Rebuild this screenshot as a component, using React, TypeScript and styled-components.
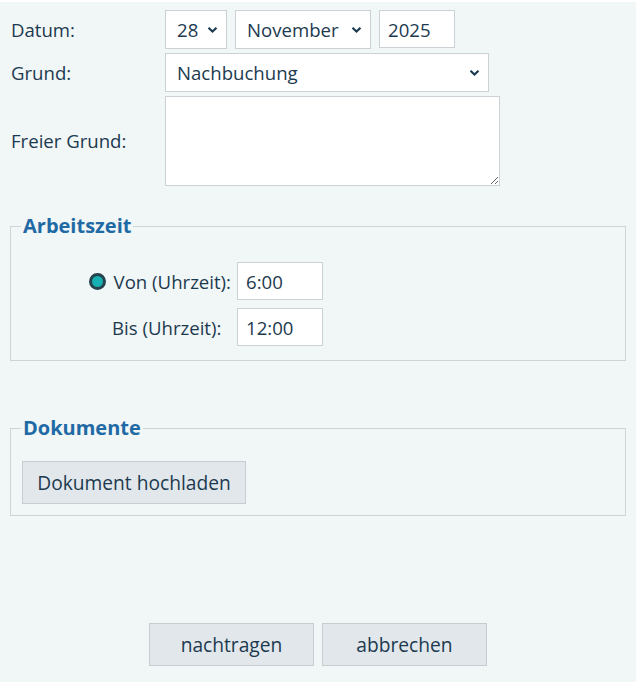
import React from 'react'
import styled, { createGlobalStyle } from 'styled-components'

const GlobalStyle = createGlobalStyle`
  body {
    margin: 0;
    background: #ffffff;
    font-family: "Open Sans", "Noto Sans", sans-serif;
    color: #1c3a4f;
  }
`

const Page = styled.div`
  margin-top: 2px;
  width: 636px;
  height: 680px;
  background: #f1f6f7;
  box-sizing: border-box;
  padding: 8px 0 0 0;
  display: flex;
  flex-direction: column;
`

const FormGrid = styled.div`
  display: grid;
  grid-template-columns: 154px auto;
  row-gap: 4px;
  padding-left: 11px;
  align-items: center;
`

const Label = styled.label`
  font-size: 18.6px;
  line-height: 22px;
`

const FieldRow = styled.div`
  display: flex;
  gap: 8px;
`

const SelectWrap = styled.div<{ $w: number }>`
  position: relative;
  width: ${p => p.$w}px;
  height: 39px;
`

const Select = styled.select`
  appearance: none;
  width: 100%;
  height: 100%;
  box-sizing: border-box;
  border: 1px solid #cbd1d4;
  background: #ffffff;
  font-family: inherit;
  font-size: 18.6px;
  color: #1c3a4f;
  padding: 0 28px 0 11px;
  border-radius: 0;
  outline: none;
`

const Chevron = styled.svg`
  position: absolute;
  right: 9px;
  top: 16px;
  pointer-events: none;
`

const TextInput = styled.input<{ $w: number }>`
  width: ${p => p.$w}px;
  height: 38px;
  box-sizing: border-box;
  border: 1px solid #cbd1d4;
  background: #ffffff;
  font-family: inherit;
  font-size: 18.6px;
  color: #1c3a4f;
  padding: 0 8px;
  border-radius: 0;
  outline: none;
`

const TextArea = styled.textarea`
  width: 335px;
  height: 90px;
  box-sizing: border-box;
  border: 1px solid #cbd1d4;
  background: #ffffff;
  font-family: inherit;
  font-size: 18px;
  border-radius: 0;
  outline: none;
  display: block;
`

const Fieldset = styled.fieldset<{ $top: number; $bottom: number }>`
  margin: ${p => p.$top}px 0 0 10px;
  width: 616px;
  box-sizing: border-box;
  border: 1px solid #cdd3d6;
  padding: 0 11px ${p => p.$bottom}px 11px;
`

const Legend = styled.legend`
  font-size: 20px;
  line-height: 24px;
  font-weight: 700;
  color: #1f6aa5;
  padding: 0 2px;
  margin-left: -1px;
`

const TimeGrid = styled.div`
  display: grid;
  grid-template-columns: 209px auto;
  column-gap: 6px;
  row-gap: 8px;
  align-items: center;
  margin-top: 24px;
`

const TimeLabel = styled.label`
  display: flex;
  align-items: center;
  justify-content: flex-end;
  gap: 8px;
  font-size: 18.6px;
`

const Radio = styled.input`
  appearance: none;
  margin: 0;
  width: 17px;
  height: 17px;
  border-radius: 50%;
  border: 3px solid #24434d;
  background: #16b0b3;
  box-sizing: border-box;
`

const Button = styled.button<{ $w: number }>`
  width: ${p => p.$w}px;
  height: 43px;
  box-sizing: border-box;
  border: 1px solid #c6cdd1;
  background: #e2e7eb;
  font-family: inherit;
  font-size: 19.2px;
  color: #1c3a4f;
  border-radius: 0;
  cursor: pointer;
`

const DocBody = styled.div`
  padding: 21px 0 0 0;
`

const Actions = styled.div`
  display: flex;
  justify-content: center;
  gap: 8px;
  margin-top: 107px;
`

const ChevronIcon = () => (
  <Chevron width="11" height="8" viewBox="0 0 11 8">
    <path d="M1.5 1.8 L5.5 5.6 L9.5 1.8" fill="none" stroke="#1c3a4f" strokeWidth="2.2" />
  </Chevron>
)

const App: React.FC = () => {
  return (
    <>
      <GlobalStyle />
      <Page>
        <FormGrid>
          <Label>Datum:</Label>
          <FieldRow>
            <SelectWrap $w={62}>
              <Select defaultValue="28">
                <option value="28">28</option>
              </Select>
              <ChevronIcon />
            </SelectWrap>
            <SelectWrap $w={136}>
              <Select defaultValue="November">
                <option value="November">November</option>
              </Select>
              <ChevronIcon />
            </SelectWrap>
            <TextInput $w={76} defaultValue="2025" />
          </FieldRow>
          <Label>Grund:</Label>
          <SelectWrap $w={324}>
            <Select defaultValue="Nachbuchung">
              <option value="Nachbuchung">Nachbuchung</option>
            </Select>
            <ChevronIcon />
          </SelectWrap>
          <Label>Freier Grund:</Label>
          <TextArea />
        </FormGrid>

        <Fieldset $top={28} $bottom={14}>
          <Legend>Arbeitszeit</Legend>
          <TimeGrid>
            <TimeLabel>
              <Radio type="radio" defaultChecked name="zeit" />
              Von (Uhrzeit):
            </TimeLabel>
            <TextInput $w={86} defaultValue="6:00" />
            <TimeLabel>Bis (Uhrzeit):&nbsp;&nbsp;</TimeLabel>
            <TextInput $w={86} defaultValue="12:00" />
          </TimeGrid>
        </Fieldset>

        <Fieldset $top={55} $bottom={11}>
          <Legend>Dokumente</Legend>
          <DocBody>
            <Button $w={224}>Dokument hochladen</Button>
          </DocBody>
        </Fieldset>

        <Actions>
          <Button $w={165}>nachtragen</Button>
          <Button $w={165}>abbrechen</Button>
        </Actions>
      </Page>
    </>
  )
}

export default App
